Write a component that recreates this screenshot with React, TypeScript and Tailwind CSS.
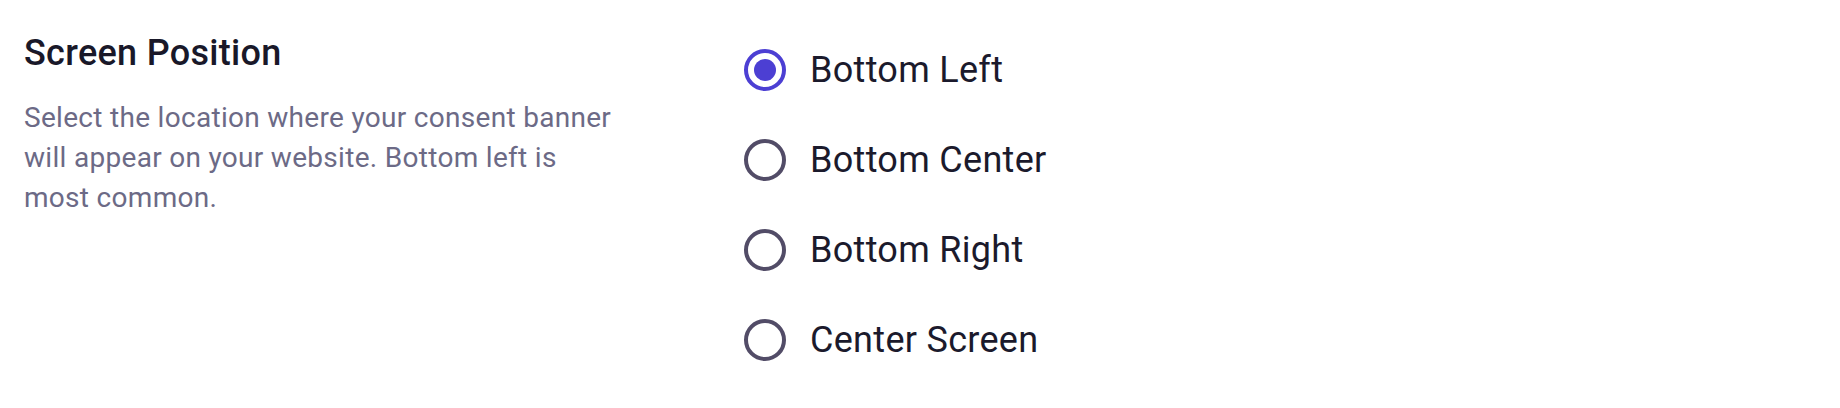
import { useState } from 'react';

const options = ['Bottom Left', 'Bottom Center', 'Bottom Right', 'Center Screen'];

function Radio({ checked }: { checked: boolean }) {
  return (
    <span
      className={`flex h-[42px] w-[42px] shrink-0 items-center justify-center rounded-full border-[4px] ${
        checked ? 'border-[#4c3fd3]' : 'border-[#524c67]'
      }`}
    >
      {checked && <span className="h-[22px] w-[22px] rounded-full bg-[#4c3fd3]" />}
    </span>
  );
}

export default function App() {
  const [position, setPosition] = useState('Bottom Left');

  return (
    <div className="flex h-[408px] w-full bg-white font-['Roboto',sans-serif] tracking-[0.3px]">
      <div className="w-[620px] shrink-0 pl-6 pt-[25px]">
        <h2 className="text-[36px] font-medium leading-[56px] text-[#191829]">Screen Position</h2>
        <p className="mt-[17px] text-[28px] leading-[40px] text-[#6c6a86]">
          Select the location where your consent banner will appear on your website. Bottom left is
          most common.
        </p>
      </div>
      <div className="ml-[124px] flex flex-col gap-[34px] pt-[42px]">
        {options.map((opt) => (
          <label
            key={opt}
            className="flex h-[56px] cursor-pointer items-center gap-6"
            onClick={() => setPosition(opt)}
          >
            <Radio checked={position === opt} />
            <span className="text-[36px] leading-[56px] text-[#1b1a2c]">{opt}</span>
          </label>
        ))}
      </div>
    </div>
  );
}
